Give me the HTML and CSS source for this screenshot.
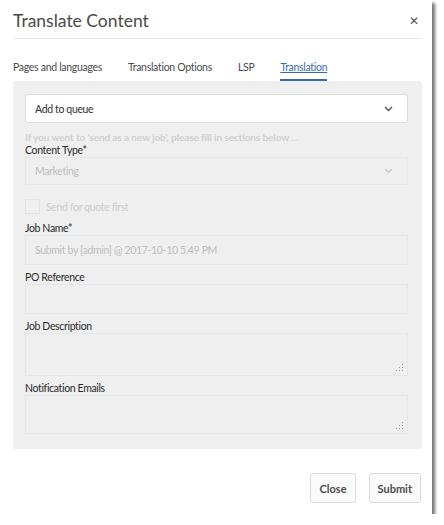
FILE: index.html
```html
<!DOCTYPE html>
<html lang="en">
<head>
    <meta charset="UTF-8">
    <meta name="viewport" content="width=device-width, initial-scale=1.0">
    <title>Translate Content</title>
    <link rel="stylesheet" href="styles.css">
</head>
<body>
    <div class="dialog">
        <div class="dialog-header">
            <h1>Translate Content</h1>
            <span class="close-x">&#x2715;</span>
        </div>

        <div class="tabs">
            <span class="tab">Pages and languages</span>
            <span class="tab">Translation Options</span>
            <span class="tab">LSP</span>
            <span class="tab active">Translation</span>
        </div>

        <div class="panel">
            <div class="select">
                <span>Add to queue</span>
                <svg class="chevron" width="9" height="6" viewBox="0 0 9 6"><path d="M1 1l3.5 3.5L8 1" fill="none" stroke="#555" stroke-width="1.4"/></svg>
            </div>

            <p class="hint">If you went to 'send as a new job', please fill in sections below ...</p>

            <label class="field-label">Content Type*</label>
            <div class="select disabled">
                <span>Marketing</span>
                <svg class="chevron" width="9" height="6" viewBox="0 0 9 6"><path d="M1 1l3.5 3.5L8 1" fill="none" stroke="#c8c8c8" stroke-width="1.4"/></svg>
            </div>

            <div class="check-row">
                <span class="checkbox"></span>
                <span>Send for quote first</span>
            </div>

            <label class="field-label">Job Name*</label>
            <input class="text-input" type="text" placeholder="Submit by [admin] @ 2017-10-10 5.49 PM" disabled>

            <label class="field-label spaced">PO Reference</label>
            <input class="text-input" type="text">

            <label class="field-label spaced">Job Description</label>
            <div class="area desc">
                <svg class="grip" width="8" height="8" viewBox="0 0 8 8"><g fill="#999"><rect x="6" y="0" width="1" height="1"/><rect x="6" y="3" width="1" height="1"/><rect x="3" y="3" width="1" height="1"/><rect x="6" y="6" width="1" height="1"/><rect x="3" y="6" width="1" height="1"/><rect x="0" y="6" width="1" height="1"/></g></svg>
            </div>

            <label class="field-label spaced">Notification Emails</label>
            <div class="area emails">
                <svg class="grip" width="8" height="8" viewBox="0 0 8 8"><g fill="#999"><rect x="6" y="0" width="1" height="1"/><rect x="6" y="3" width="1" height="1"/><rect x="3" y="3" width="1" height="1"/><rect x="6" y="6" width="1" height="1"/><rect x="3" y="6" width="1" height="1"/><rect x="0" y="6" width="1" height="1"/></g></svg>
            </div>
        </div>

        <div class="dialog-footer">
            <button class="btn">Close</button>
            <button class="btn">Submit</button>
        </div>
    </div>
</body>
</html>
```

FILE: styles.css
```css
body {
    margin: 0;
    background: #fff;
    font-family: Lato, "Open Sans", sans-serif;
    color: #333;
}
.dialog {
    width: 432px;
    height: 514px;
    background: #fff;
    box-shadow: 3px 3px 3px rgba(0, 0, 0, 0.55);
    display: flex;
    flex-direction: column;
}
.dialog-header {
    height: 39px;
    margin: 0 10px 0 13px;
    border-bottom: 1px solid #e8e8e8;
    display: flex;
    align-items: center;
    justify-content: space-between;
    box-sizing: border-box;
}
.dialog-header h1 {
    margin: 2px 0 0;
    font-size: 17.5px;
    font-weight: normal;
    color: #4a4a4a;
}
.close-x {
    font-size: 12px;
    color: #555;
    margin: 2px 3px 0 0;
}
.tabs {
    height: 42px;
    margin-left: 13px;
    display: flex;
    align-items: flex-end;
    gap: 26px;
}
.tab {
    font-size: 10.5px;
    letter-spacing: -0.3px;
    line-height: 14px;
    color: #4b4b4b;
    padding-bottom: 5px;
    border-bottom: 2px solid transparent;
}
.tab.active {
    color: #3a68b8;
    text-decoration: underline;
    border-bottom-color: #3a68b8;
}
.panel {
    margin: 0 10px 0 13px;
    padding: 13px 14px 15px 12px;
    background: #efefef;
    border-radius: 3px;
    font-size: 10.5px;
    letter-spacing: -0.35px;
}
.select {
    height: 29px;
    box-sizing: border-box;
    background: #fff;
    border: 1px solid #dcdcdc;
    border-radius: 3px;
    padding: 0 14px 0 9px;
    display: flex;
    align-items: center;
    justify-content: space-between;
    color: #2e2e2e;
}
.select.disabled {
    height: 28px;
    background: #efefef;
    border-color: #e7e7e7;
    border-radius: 0;
    color: #bdbdbd;
}
.hint {
    margin: 8px 0 0;
    line-height: 13px;
    font-size: 10px;
    font-weight: bold;
    letter-spacing: -0.1px;
    color: #d0d0d0;
}
.field-label {
    display: block;
    line-height: 13px;
    color: #2a2a2a;
}
.field-label.spaced {
    margin-top: 6px;
}
.check-row {
    margin: 14px 0 8px;
    display: flex;
    align-items: center;
    gap: 6px;
    color: #cbcbcb;
}
.checkbox {
    width: 15px;
    height: 15px;
    box-sizing: border-box;
    border: 1px solid #e3e3e3;
}
.text-input {
    display: block;
    width: 100%;
    height: 30px;
    box-sizing: border-box;
    margin: 0;
    padding: 0 9px;
    background: #efefef;
    border: 1px solid #e6e6e6;
    font-family: inherit;
    font-size: 10.5px;
    letter-spacing: -0.35px;
    outline: none;
}
.text-input::placeholder {
    color: #bdbdbd;
}
.area {
    position: relative;
    box-sizing: border-box;
    border: 1px solid #e6e6e6;
}
.area.desc {
    height: 43px;
}
.area.emails {
    height: 39px;
}
.grip {
    position: absolute;
    right: 3px;
    bottom: 3px;
}
.dialog-footer {
    flex: 1;
    display: flex;
    justify-content: flex-end;
    align-items: flex-start;
    gap: 13px;
    padding: 24px 11px 0 0;
}
.btn {
    height: 30px;
    padding: 0 8px;
    background: #fafafa;
    border: 1px solid #dcdcdc;
    border-radius: 3px;
    font-family: inherit;
    font-size: 11px;
    font-weight: bold;
    color: #4b4b4b;
}
```
